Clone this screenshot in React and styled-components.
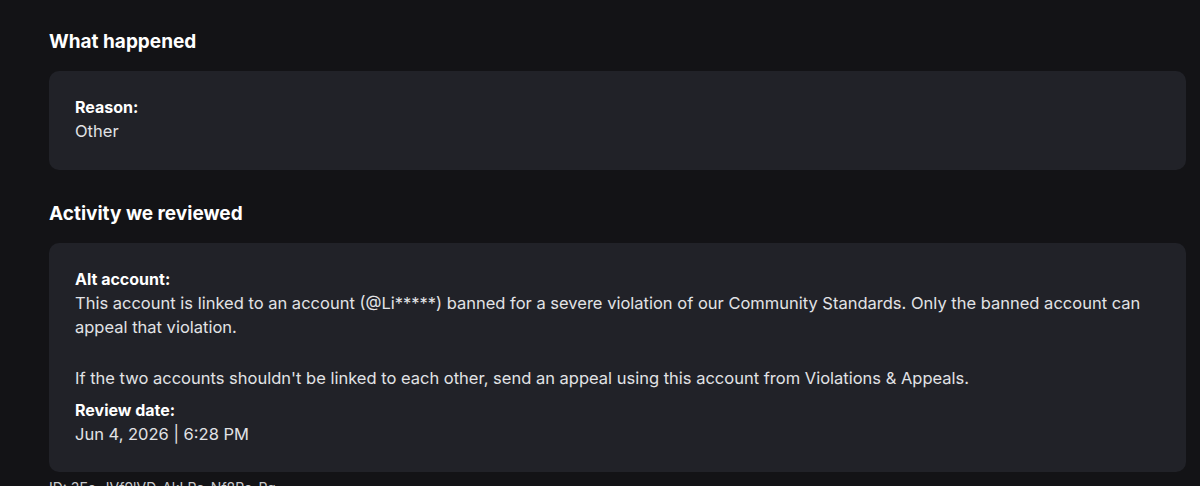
import React from "react";
import styled, { createGlobalStyle } from "styled-components";

const Global = createGlobalStyle`
  html, body { margin: 0; padding: 0; background: #131316; }
  body { font-family: Inter, "Noto Sans", "Liberation Sans", sans-serif; color: #fff; -webkit-font-smoothing: antialiased; }
`;

const Page = styled.div`
  height: 486px;
  overflow: hidden;
  padding: 30px 14px 0 49px;
  box-sizing: border-box;
`;

const Section = styled.section`
  display: flex;
  flex-direction: column;
  gap: 17px;
  margin-bottom: ${(p) => p.$gap || 0}px;
`;

const Heading = styled.h2`
  margin: 0;
  font-size: 19px;
  line-height: 24px;
  font-weight: 700;
  color: #ffffff;
`;

const Card = styled.div`
  background: #212228;
  border-radius: 10px;
  padding: 25px 26px ${(p) => p.$pb || 27}px;
  display: flex;
  flex-direction: column;
`;

const Field = styled.div`
  display: flex;
  flex-direction: column;
  margin-top: ${(p) => p.$mt || 0}px;
`;

const Label = styled.div`
  font-size: 16px;
  line-height: 23px;
  font-weight: 700;
  color: #ffffff;
`;

const Value = styled.p`
  margin: ${(p) => p.$mt || 0}px 0 0;
  font-size: 16.5px;
  line-height: 24px;
  font-weight: 400;
  color: #e2e3e6;
`;

const Footer = styled.div`
  margin-top: 6px;
  font-size: 14px;
  line-height: 20px;
  color: #c9cacd;
`;

export default function App() {
  return (
    <>
      <Global />
      <Page>
        <Section $gap={32}>
          <Heading>What happened</Heading>
          <Card>
            <Field>
              <Label>Reason:</Label>
              <Value>Other</Value>
            </Field>
          </Card>
        </Section>
        <Section>
          <Heading>Activity we reviewed</Heading>
          <Card $pb={26}>
            <Field>
              <Label>Alt account:</Label>
              <Value>
                This account is linked to an account (@Li*****) banned for a severe violation of our Community Standards. Only the banned account can appeal that violation.
              </Value>
              <Value $mt={27}>
                If the two accounts shouldn't be linked to each other, send an appeal using this account from Violations &amp; Appeals.
              </Value>
            </Field>
            <Field $mt={9}>
              <Label>Review date:</Label>
              <Value>Jun 4, 2026 | 6:28 PM</Value>
            </Field>
          </Card>
        </Section>
        <Footer>ID: 3Ea-JVf9lVD-AkLRe-Nf8Ra-Rq</Footer>
      </Page>
    </>
  );
}
